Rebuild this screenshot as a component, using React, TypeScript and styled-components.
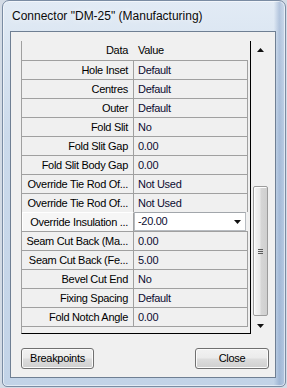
import React from 'react';
import styled, { createGlobalStyle } from 'styled-components';

const GlobalStyle = createGlobalStyle`
  html, body {
    margin: 0;
    padding: 0;
  }
  body {
    width: 287px;
    height: 388px;
    overflow: hidden;
    background: #d3dbe5;
    font-family: "Liberation Sans", Arial, sans-serif;
  }
`;

type Property = { label: string; value: string; selected?: boolean };

const properties: Property[] = [
  { label: 'Hole Inset', value: 'Default' },
  { label: 'Centres', value: 'Default' },
  { label: 'Outer', value: 'Default' },
  { label: 'Fold Slit', value: 'No' },
  { label: 'Fold Slit Gap', value: '0.00' },
  { label: 'Fold Slit Body Gap', value: '0.00' },
  { label: 'Override Tie Rod Of...', value: 'Not Used' },
  { label: 'Override Tie Rod Of...', value: 'Not Used' },
  { label: 'Override Insulation ...', value: '-20.00', selected: true },
  { label: 'Seam Cut Back (Ma...', value: '0.00' },
  { label: 'Seam Cut Back (Fe...', value: '5.00' },
  { label: 'Bevel Cut End', value: 'No' },
  { label: 'Fixing Spacing', value: 'Default' },
  { label: 'Fold Notch Angle', value: '0.00' },
];

const Arrow = ({ down }: { down?: boolean }) => (
  <svg width="7" height="4" viewBox="0 0 7 4">
    {down ? <path d="M0 0H7L3.5 4Z" fill="#111" /> : <path d="M0 4H7L3.5 0Z" fill="#111" />}
  </svg>
);

const App = () => {
  return (
    <>
      <GlobalStyle />
      <Frame>
        <TitleBar>Connector "DM-25" (Manufacturing)</TitleBar>
        <Client>
          <GridBox>
            <Table>
              <Header>
                <LabelCell>Data</LabelCell>
                <ValueCell>Value</ValueCell>
              </Header>
              {properties.map((p, i) => (
                <Row key={i} $selected={p.selected}>
                  <LabelCell $selected={p.selected}>{p.label}</LabelCell>
                  {p.selected ? (
                    <Combo>
                      <span>{p.value}</span>
                      <Arrow down />
                    </Combo>
                  ) : (
                    <ValueCell>{p.value}</ValueCell>
                  )}
                </Row>
              ))}
              <RowsEnd />
            </Table>
            <ScrollBar>
              <ScrollButton>
                <Arrow />
              </ScrollButton>
              <Track>
                <Thumb>
                  <Grip>
                    <i />
                    <i />
                    <i />
                  </Grip>
                </Thumb>
              </Track>
              <ScrollButton>
                <Arrow down />
              </ScrollButton>
            </ScrollBar>
          </GridBox>
          <Footer>
            <Button $width={73}>Breakpoints</Button>
            <Button $width={74}>Close</Button>
          </Footer>
        </Client>
      </Frame>
    </>
  );
};

export default App;

const Frame = styled.div`
  box-sizing: border-box;
  width: 284px;
  height: 387px;
  margin-left: 2px;
  border: 1px solid #7a8ca3;
  border-radius: 7px 7px 5px 5px;
  background:
    linear-gradient(to right, rgba(255, 255, 255, 0) 0%, rgba(255, 255, 255, 0) 96%, rgba(96, 130, 180, 0.35) 98%, rgba(96, 130, 180, 0.15) 100%),
    linear-gradient(to bottom, #e2ebf5 0%, #cbdaeb 35%, #c2d3e7 100%);
  box-shadow: inset 0 0 0 1px rgba(255, 255, 255, 0.55);
  display: flex;
  flex-direction: column;
  padding: 0 9px 8px 7px;
`;

const TitleBar = styled.div`
  height: 30px;
  display: flex;
  align-items: center;
  padding-left: 2px;
  font-size: 12px;
  color: #0a0a0a;
  white-space: nowrap;
  text-shadow: 0 0 6px rgba(255, 255, 255, 0.9);
`;

const Client = styled.div`
  box-sizing: border-box;
  width: 266px;
  height: 347px;
  border: 1px solid #6f7f93;
  background: #f0f0f0;
  padding: 9px 6px 8px 10px;
  display: flex;
  flex-direction: column;
`;

const GridBox = styled.div`
  display: flex;
  height: 293px;
  width: 248px;
`;

const Table = styled.div`
  box-sizing: border-box;
  width: 230px;
  height: 293px;
  border-left: 1px solid #a0a0a0;
  border-right: 1px solid #000;
  border-bottom: 1px solid #000;
  display: flex;
  flex-direction: column;
`;

const Header = styled.div`
  display: flex;
  height: 19px;
  width: 226px;
`;

const Row = styled.div<{ $selected?: boolean }>`
  box-sizing: border-box;
  display: flex;
  height: 19px;
  width: 226px;
  border-top: ${(p) => (p.$selected ? 'none' : '1px solid #a0a0a0')};
`;

const RowsEnd = styled.div`
  width: 226px;
  border-top: 1px solid #a0a0a0;
`;

const cellText = `
  font-size: 11px;
  letter-spacing: -0.3px;
  line-height: 18px;
  white-space: nowrap;
  overflow: hidden;
`;

const LabelCell = styled.div<{ $selected?: boolean }>`
  box-sizing: border-box;
  width: 112px;
  flex-shrink: 0;
  padding-right: 5px;
  text-align: right;
  color: #000;
  border-right: 1px solid #a0a0a0;
  ${cellText}
  ${(p) =>
    p.$selected &&
    `
    border-top: 1px solid #fff;
    box-shadow: inset 1px 0 0 #fff;
    background: #f6f6f6;
  `}

  ${Header} & {
    border-right-color: transparent;
  }
`;

const ValueCell = styled.div`
  box-sizing: border-box;
  width: 114px;
  padding-left: 4px;
  color: #0c0c30;
  border-right: 1px solid #a0a0a0;
  ${cellText}

  ${Header} & {
    border-right-color: transparent;
    color: #000;
  }
`;

const Combo = styled.div`
  box-sizing: border-box;
  width: 112px;
  height: 19px;
  background: #fff;
  border: 1px solid #b8bcc1;
  border-top-color: #a2a6ab;
  display: flex;
  align-items: center;
  justify-content: space-between;
  padding: 0 4px 0 3px;
  color: #0c0c30;
  ${cellText}
  line-height: 17px;
`;

const ScrollBar = styled.div`
  width: 18px;
  display: flex;
  flex-direction: column;
`;

const ScrollButton = styled.div`
  height: 17px;
  display: flex;
  align-items: center;
  justify-content: center;
  padding-left: 1px;
`;

const Track = styled.div`
  flex: 1;
  display: flex;
  flex-direction: column;
  justify-content: flex-end;
  padding: 0 0 1px 2px;
`;

const Thumb = styled.div`
  box-sizing: border-box;
  width: 15px;
  height: 130px;
  border: 1px solid #9c9c9c;
  border-radius: 2px;
  background: linear-gradient(to right, #f6f6f6 0%, #e9e9e9 45%, #d6d6d6 55%, #cfcfcf 100%);
  box-shadow: inset 1px 1px 0 #fdfdfd;
  display: flex;
  align-items: center;
  justify-content: center;
`;

const Grip = styled.div`
  display: flex;
  flex-direction: column;
  gap: 1px;

  i {
    display: block;
    width: 5px;
    height: 1px;
    background: #5a5a5a;
  }
`;

const Footer = styled.div`
  margin-top: 14px;
  display: flex;
  justify-content: space-between;
`;

const Button = styled.button<{ $width: number }>`
  box-sizing: border-box;
  width: ${(p) => p.$width}px;
  height: 21px;
  padding: 0 0 1px;
  border: 1px solid #707070;
  border-radius: 3px;
  background: linear-gradient(to bottom, #f2f2f2 0%, #ebebeb 48%, #dddddd 52%, #cfcfcf 100%);
  box-shadow: inset 0 0 0 1px #fbfbfb;
  font-family: "Liberation Sans", Arial, sans-serif;
  font-size: 11px;
  letter-spacing: -0.3px;
  color: #000;
  cursor: pointer;
`;
